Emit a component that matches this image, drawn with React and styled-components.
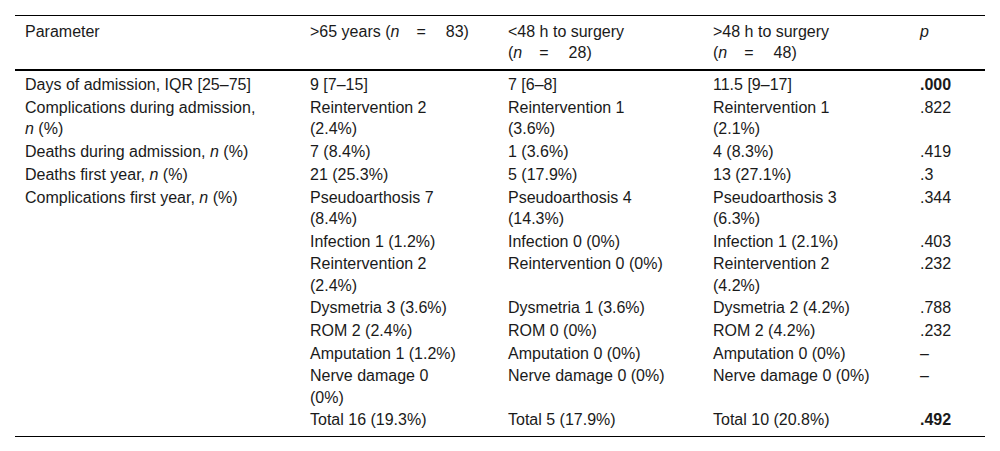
import React from "react";
import styled, { createGlobalStyle } from "styled-components";

const GlobalStyle = createGlobalStyle`
    html, body {
        margin: 0;
        padding: 0;
        background: #fff;
    }
    body {
        font-family: "Liberation Sans", Arial, sans-serif;
        color: #1a1a1a;
    }
`;

const Table = styled.table`
    margin: 15px 15px 0;
    width: 970px;
    table-layout: fixed;
    border-collapse: separate;
    border-spacing: 0;
    font-size: 16px;
    line-height: 21.3px;
`;

const HeadCell = styled.th`
    text-align: left;
    vertical-align: top;
    font-weight: normal;
    padding: 5px 10px 5.5px;
    border-top: 1px solid #000;
    border-bottom: 2px solid #000;
`;

const Row = styled.tr`
    td:nth-child(1) {
        padding-right: 40px;
    }
    td:nth-child(2) {
        padding-right: 37px;
    }
    td:nth-child(3) {
        padding-right: 30px;
    }
    td:nth-child(4) {
        padding-right: 35px;
    }
    &:first-child td {
        padding-top: 3.4px;
    }
    &:last-child td {
        padding-bottom: 5px;
        border-bottom: 1px solid #000;
    }
`;

const Cell = styled.td`
    vertical-align: top;
    text-align: left;
    padding: 1.4px 10px 0;
    font-weight: ${(props) => (props.$bold ? "bold" : "normal")};
`;

const Group = styled.span`
    white-space: nowrap;
`;

const Eq = styled.span`
    margin: 0 20px 0 17px;
`;

const N = ({ value }) => (
    <Group>
        (<i>n</i>
        <Eq>=</Eq>
        {value})
    </Group>
);

const rows = [
    ["Days of admission, IQR [25–75]", "9 [7–15]", "7 [6–8]", "11.5 [9–17]", ".000", true],
    [
        <>
            Complications during admission, <i>n</i> (%)
        </>,
        "Reintervention 2 (2.4%)",
        "Reintervention 1 (3.6%)",
        "Reintervention 1 (2.1%)",
        ".822",
    ],
    [
        <>
            Deaths during admission, <i>n</i> (%)
        </>,
        "7 (8.4%)",
        "1 (3.6%)",
        "4 (8.3%)",
        ".419",
    ],
    [
        <>
            Deaths first year, <i>n</i> (%)
        </>,
        "21 (25.3%)",
        "5 (17.9%)",
        "13 (27.1%)",
        ".3",
    ],
    [
        <>
            Complications first year, <i>n</i> (%)
        </>,
        "Pseudoarthosis 7 (8.4%)",
        "Pseudoarthosis 4 (14.3%)",
        "Pseudoarthosis 3 (6.3%)",
        ".344",
    ],
    ["", "Infection 1 (1.2%)", "Infection 0 (0%)", "Infection 1 (2.1%)", ".403"],
    ["", "Reintervention 2 (2.4%)", "Reintervention 0 (0%)", "Reintervention 2 (4.2%)", ".232"],
    ["", "Dysmetria 3 (3.6%)", "Dysmetria 1 (3.6%)", "Dysmetria 2 (4.2%)", ".788"],
    ["", "ROM 2 (2.4%)", "ROM 0 (0%)", "ROM 2 (4.2%)", ".232"],
    ["", "Amputation 1 (1.2%)", "Amputation 0 (0%)", "Amputation 0 (0%)", "–"],
    ["", "Nerve damage 0 (0%)", "Nerve damage 0 (0%)", "Nerve damage 0 (0%)", "–"],
    ["", "Total 16 (19.3%)", "Total 5 (17.9%)", "Total 10 (20.8%)", ".492", true],
];

const App = () => {
    return (
        <>
            <GlobalStyle />
            <Table>
                <colgroup>
                    <col style={{ width: 285 }} />
                    <col style={{ width: 198 }} />
                    <col style={{ width: 205 }} />
                    <col style={{ width: 207 }} />
                    <col style={{ width: 75 }} />
                </colgroup>
                <thead>
                    <tr>
                        <HeadCell>Parameter</HeadCell>
                        <HeadCell>
                            &gt;65 years <N value="83" />
                        </HeadCell>
                        <HeadCell>
                            &lt;48 h to surgery <N value="28" />
                        </HeadCell>
                        <HeadCell>
                            &gt;48 h to surgery <N value="48" />
                        </HeadCell>
                        <HeadCell>
                            <i>p</i>
                        </HeadCell>
                    </tr>
                </thead>
                <tbody>
                    {rows.map(([param, a, b, c, p, bold], i) => (
                        <Row key={i}>
                            <Cell>{param}</Cell>
                            <Cell>{a}</Cell>
                            <Cell>{b}</Cell>
                            <Cell>{c}</Cell>
                            <Cell $bold={bold}>{p}</Cell>
                        </Row>
                    ))}
                </tbody>
            </Table>
        </>
    );
};

export default App;
